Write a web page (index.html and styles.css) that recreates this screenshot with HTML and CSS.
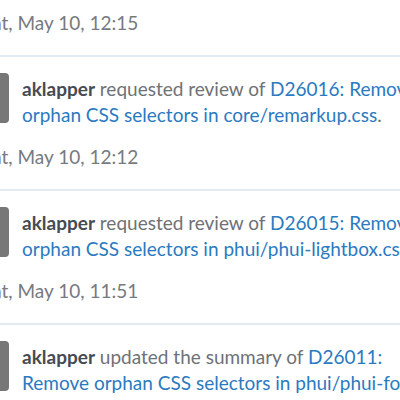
FILE: index.html
```html
<!DOCTYPE html>
<html>
<head>
    <meta charset="UTF-8">
    <title>Feed</title>
    <link rel="stylesheet" href="styles.css">
</head>
<body>
    <div class="feed">
        <div class="feed-block">
            <div class="feed-date">Sat, May 10, 12:15</div>
            <div class="feed-story">
                <div class="avatar"></div>
                <div class="story-text">
                    <a class="user" href="#">aklapper</a> requested review of
                    <a class="link" href="#">D26016: Remove orphan CSS selectors in core/remarkup.css</a>.
                </div>
            </div>
        </div>

        <div class="feed-block">
            <div class="feed-date">Sat, May 10, 12:12</div>
            <div class="feed-story">
                <div class="avatar"></div>
                <div class="story-text">
                    <a class="user" href="#">aklapper</a> requested review of
                    <a class="link" href="#">D26015: Remove orphan CSS selectors in phui/phui-lightbox.css</a>.
                </div>
            </div>
        </div>

        <div class="feed-block">
            <div class="feed-date">Sat, May 10, 11:51</div>
            <div class="feed-story">
                <div class="avatar"></div>
                <div class="story-text">
                    <a class="user" href="#">aklapper</a> updated the summary of
                    <a class="link" href="#">D26011:<br>Remove orphan CSS selectors in phui/phui-form.css</a>.
                </div>
            </div>
        </div>
    </div>
</body>
</html>
```

FILE: styles.css
```css
body {
    margin: 0;
    background-color: #ffffff;
    font-family: Lato, "Open Sans", sans-serif;
    font-size: 19px;
    overflow: hidden;
}

.feed {
    margin-left: -41px;
    width: 540px;
}

.feed-block {
    padding-top: 11px;
}

/* cabeçalho com a data */
.feed-date {
    padding-left: 23px;
    line-height: 24px;
    color: #777a80;
    padding-bottom: 20px;
    border-bottom: 2px solid #e3ebf2;
}

.feed-story {
    display: flex;
    gap: 13px;
    padding: 16px 0 6px;
}

.avatar {
    flex: 0 0 50px;
    height: 50px;
    background-color: #777777;
    border-radius: 4px;
}

.story-text {
    width: 445px;
    padding-top: 3px;
    line-height: 26px;
    color: #6e7177;
}

.user {
    color: #464a52;
    font-weight: bold;
    text-decoration: none;
}

.link {
    color: #2a7ac1;
    text-decoration: none;
}
```
